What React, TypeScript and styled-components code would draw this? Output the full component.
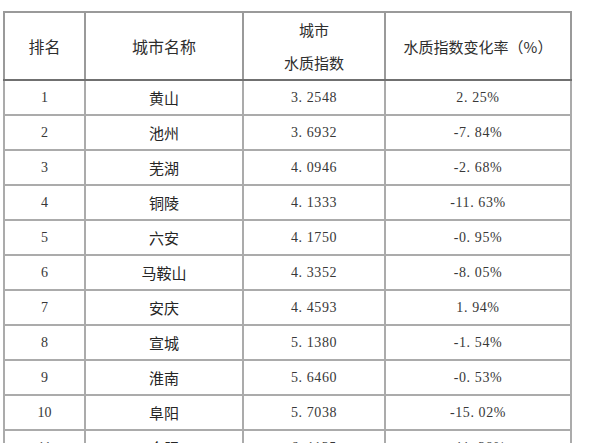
import React from "react";
import styled, { createGlobalStyle } from "styled-components";

const Global = createGlobalStyle`
  html, body { margin: 0; padding: 0; background: #fff; }
  body { overflow: hidden; width: 592px; height: 443px; }
`;

const Page = styled.div`
  padding: 11px 0 0 3px;
  height: 443px;
  box-sizing: border-box;
  overflow: hidden;
`;

const Table = styled.table`
  border-collapse: collapse;
  table-layout: fixed;
  width: 567px;
  border-top: 2px solid #7a7a7a;
  border-left: 2px solid #7a7a7a;
`;

const HeadCell = styled.th<{ $size?: number }>`
  height: 66px;
  padding: 0;
  border: 2px solid #9a9a9a;
  border-bottom: 2px solid #707070;
  font-family: "Noto Sans CJK SC", sans-serif;
  font-weight: 400;
  font-size: ${(p) => p.$size ?? 16}px;
  color: #2e2e2e;
  text-align: center;
  vertical-align: middle;
  line-height: 33px;
`;

const Cell = styled.td<{ $kind: "rank" | "city" | "num" }>`
  height: 32px;
  padding: 0;
  border: 2px solid #ababab;
  text-align: center;
  vertical-align: middle;
  color: ${(p) => (p.$kind === "city" ? "#262626" : "#383838")};
  font-family: ${(p) =>
    p.$kind === "city"
      ? '"Noto Sans CJK SC", sans-serif'
      : '"Liberation Serif", "Noto Sans CJK SC", serif'};
  font-size: ${(p) => (p.$kind === "city" ? 15 : 14)}px;
  letter-spacing: ${(p) => (p.$kind === "num" ? 0.6 : 0)}px;
  padding-top: ${(p) => (p.$kind === "city" ? 0 : 1)}px;
`;

const rows: [string, string, string, string][] = [
  ["1", "黄山", "3. 2548", "2. 25%"],
  ["2", "池州", "3. 6932", "-7. 84%"],
  ["3", "芜湖", "4. 0946", "-2. 68%"],
  ["4", "铜陵", "4. 1333", "-11. 63%"],
  ["5", "六安", "4. 1750", "-0. 95%"],
  ["6", "马鞍山", "4. 3352", "-8. 05%"],
  ["7", "安庆", "4. 4593", "1. 94%"],
  ["8", "宣城", "5. 1380", "-1. 54%"],
  ["9", "淮南", "5. 6460", "-0. 53%"],
  ["10", "阜阳", "5. 7038", "-15. 02%"],
  ["11", "合肥", "6. 1135", "-11. 29%"],
];

export default function App() {
  return (
    <>
      <Global />
      <Page>
        <Table>
          <colgroup>
            <col style={{ width: 81 }} />
            <col style={{ width: 158 }} />
            <col style={{ width: 142 }} />
            <col style={{ width: 186 }} />
          </colgroup>
          <thead>
            <tr>
              <HeadCell>排名</HeadCell>
              <HeadCell>城市名称</HeadCell>
              <HeadCell $size={15}>
                城市
                <br />
                水质指数
              </HeadCell>
              <HeadCell $size={15}>水质指数变化率（%）</HeadCell>
            </tr>
          </thead>
          <tbody>
            {rows.map((r) => (
              <tr key={r[0]}>
                <Cell $kind="rank">{r[0]}</Cell>
                <Cell $kind="city">{r[1]}</Cell>
                <Cell $kind="num">{r[2]}</Cell>
                <Cell $kind="num">{r[3]}</Cell>
              </tr>
            ))}
          </tbody>
        </Table>
      </Page>
    </>
  );
}
